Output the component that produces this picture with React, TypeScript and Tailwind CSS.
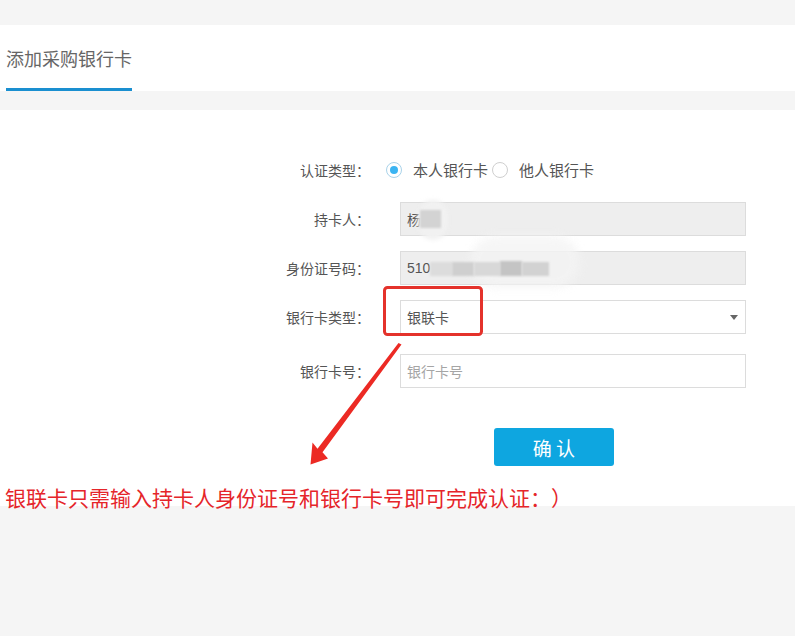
import React from "react";

const font = { fontFamily: '"Noto Sans CJK SC", "Microsoft YaHei", "Noto Sans", sans-serif' };

function Label({ children }: { children: React.ReactNode }) {
  return (
    <div className="w-[370px] shrink-0 text-right text-[14px] text-[#555] leading-[34px] whitespace-nowrap">
      {children}：
    </div>
  );
}

export default function App() {
  return (
    <div className="relative w-[795px] h-[636px] bg-[#f5f5f5] overflow-hidden [text-spacing-trim:space-all]" style={font}>
      <div className="pt-[25px]">
        <div className="bg-white h-[66px] px-[6px] flex">
          <div className="flex flex-col justify-end">
            <div className="text-[18px] text-[#666] leading-[24px] pb-[18px]">添加采购银行卡</div>
            <div className="h-[3px] bg-[#1a8fd0]" />
          </div>
        </div>
        <div className="mt-[19px] bg-white h-[396px] pt-[43px] flex flex-col">
          <div className="flex items-center h-[34px]">
            <Label>认证类型</Label>
            <div className="ml-[16px] flex items-center text-[15px] text-[#555]">
              <span className="w-[16px] h-[16px] rounded-full border border-[#a9d3ea] flex items-center justify-center">
                <span className="w-[8px] h-[8px] rounded-full bg-[#3bb4f2]" />
              </span>
              <span className="ml-[11px]">本人银行卡</span>
              <span className="ml-[4px] w-[16px] h-[16px] rounded-full border border-[#cfcfcf]" />
              <span className="ml-[11px]">他人银行卡</span>
            </div>
          </div>
          <div className="flex items-center mt-[15px]">
            <Label>持卡人</Label>
            <div className="ml-[30px] w-[346px] h-[34px] bg-[#eeeeee] border border-[#dcdcdc] px-[6px] flex items-center text-[14px] text-[#555]">
              杨
            </div>
          </div>
          <div className="flex items-center mt-[15px]">
            <Label>身份证号码</Label>
            <div className="ml-[30px] w-[346px] h-[34px] bg-[#eeeeee] border border-[#dcdcdc] px-[6px] flex items-center text-[14px] text-[#555]" style={{ fontFamily: '"Liberation Sans", "Noto Sans CJK SC", sans-serif' }}>
              510
            </div>
          </div>
          <div className="flex items-center mt-[15px]">
            <Label>银行卡类型</Label>
            <div className="ml-[30px] w-[346px] h-[34px] bg-white border border-[#dcdcdc] px-[6px] flex items-center justify-between text-[14px] text-[#555]">
              <span>银联卡</span>
              <span className="w-0 h-0 border-l-[4px] border-r-[4px] border-t-[5px] border-l-transparent border-r-transparent border-t-[#666] mr-[1px]" />
            </div>
          </div>
          <div className="flex items-center mt-[20px]">
            <Label>银行卡号</Label>
            <div className="ml-[30px] w-[346px] h-[34px] bg-white border border-[#dcdcdc] px-[6px] flex items-center text-[14px] text-[#a5a5a5]">
              银行卡号
            </div>
          </div>
          <div className="flex mt-[40px] pl-[494px]">
            <button className="w-[120px] h-[38px] rounded-[3px] bg-[#0ea6e0] text-white text-[19px] leading-none">确 认</button>
          </div>
          <div className="mt-[18px] pl-[5px] text-[21px] leading-[26px] text-[#e5252a] whitespace-nowrap">
            银联卡只需输入持卡人身份证号和银行卡号即可完成认证：）
          </div>
        </div>
      </div>

      {/* blur smudges */}
      <div className="absolute left-[418px] top-[200px] w-[30px] h-[40px] rounded-full bg-[#f1f1f1] blur-[2px]" />
      <div className="absolute left-[420px] top-[210px] w-[21px] h-[18px] bg-[#d3d3d3] blur-[1px]" />
      <div className="absolute left-[470px] top-[236px] w-[110px] h-[52px] rounded-full bg-[#f4f4f4] blur-[4px] opacity-80" />
      <div className="absolute left-[430px] top-[262px] w-[22px] h-[14px] bg-[#dcdcdc] blur-[1px]" />
      <div className="absolute left-[452px] top-[262px] w-[22px] h-[14px] bg-[#cfcfcf] blur-[1px]" />
      <div className="absolute left-[474px] top-[262px] w-[26px] h-[14px] bg-[#d8d8d8] blur-[1px]" />
      <div className="absolute left-[500px] top-[261px] w-[22px] h-[15px] bg-[#c4c4c4] blur-[1px]" />
      <div className="absolute left-[522px] top-[262px] w-[27px] h-[14px] bg-[#d2d2d2] blur-[1px]" />

      {/* annotations */}
      <svg className="absolute left-0 top-0 pointer-events-none" width="795" height="636">
        <rect x="384.5" y="287.5" width="97" height="47" rx="3" fill="none" stroke="#e4322b" strokeWidth="3" />
        <polygon
          points="398.5,343 401.5,344.5 322.5,452.3 328,458.5 310.5,464.5 312.5,442.5 317.5,448.7"
          fill="#ec2a24"
        />
      </svg>
    </div>
  );
}
